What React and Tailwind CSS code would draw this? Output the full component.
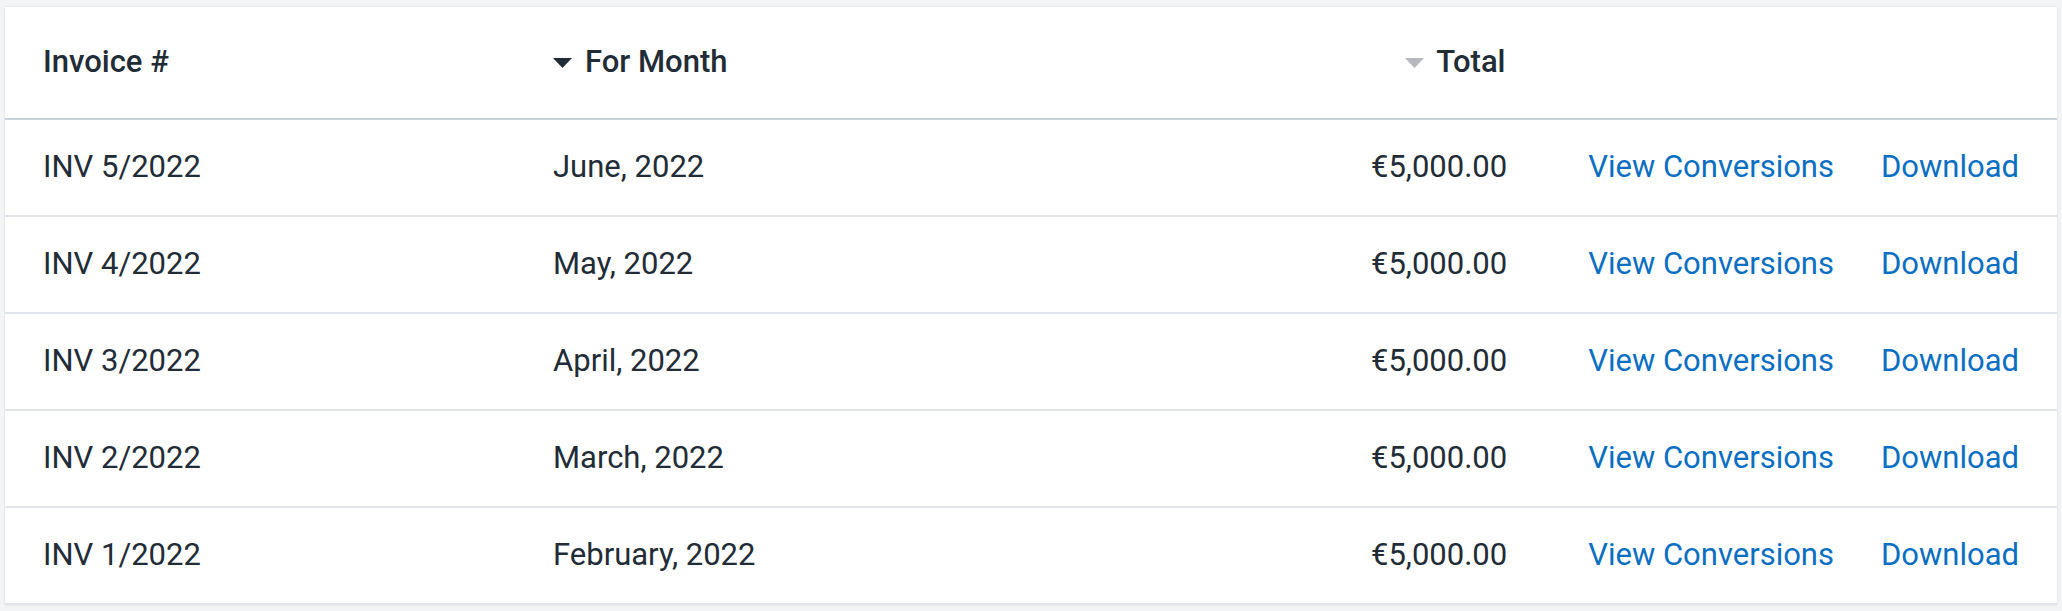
import React from "react";

const rows = [
  ["INV 5/2022", "June, 2022"],
  ["INV 4/2022", "May, 2022"],
  ["INV 3/2022", "April, 2022"],
  ["INV 2/2022", "March, 2022"],
  ["INV 1/2022", "February, 2022"],
];

function Caret({ color }) {
  return (
    <svg width="19" height="10" viewBox="0 0 19 10" className="shrink-0">
      <path d="M0 0 L19 0 L9.5 10 Z" fill={color} />
    </svg>
  );
}

export default function App() {
  return (
    <div
      className="min-h-[611px] bg-[#f3f4f6] pt-[7px] pl-[5px] pr-[5px] overflow-hidden"
      style={{ fontFamily: "Roboto, 'Liberation Sans', sans-serif" }}
    >
      <div className="bg-white shadow-[0_0_2px_rgba(0,0,0,0.12)] text-[31px] text-[#222c37]">
        <div className="grid grid-cols-[510px_1fr_auto_auto_auto] items-center px-[38px] h-[113px] border-b-2 border-[#c9d2dc] font-medium">
          <div>Invoice #</div>
          <div className="flex items-center gap-[13px]">
            <Caret color="#222c37" />
            <span>For Month</span>
          </div>
          <div className="flex items-center gap-[12px] justify-end">
            <Caret color="#b5b8bd" />
            <span>Total</span>
          </div>
          <div className="pl-[81px] invisible">View Conversions</div>
          <div className="pl-[47px] invisible">Download</div>
        </div>
        {rows.map(([inv, month]) => (
          <div
            key={inv}
            className="grid grid-cols-[510px_1fr_auto_auto_auto] items-center px-[38px] h-[97px] border-b-2 border-[#e1e4e8]"
          >
            <div>{inv}</div>
            <div>{month}</div>
            <div className="text-right">€5,000.00</div>
            <div className="pl-[81px] text-[#0a6fc2]">View Conversions</div>
            <div className="pl-[47px] text-[#0a6fc2]">Download</div>
          </div>
        ))}
      </div>
    </div>
  );
}
